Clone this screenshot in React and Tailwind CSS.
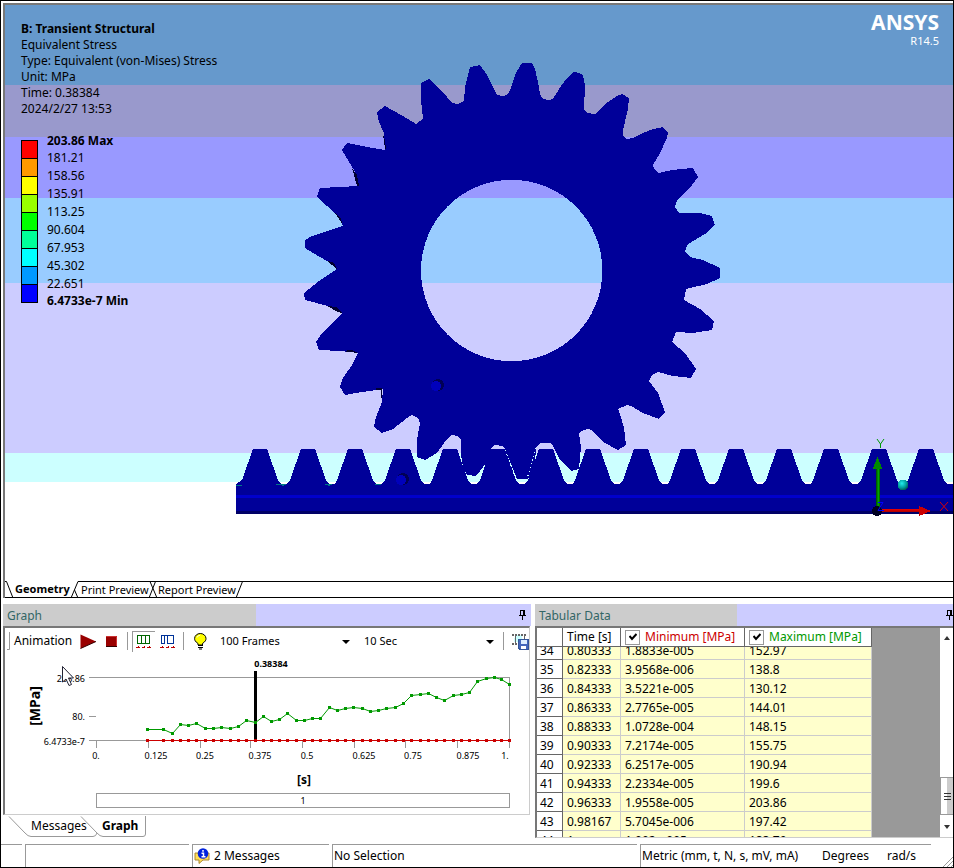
const BANDS = [
  "h-[80px] bg-[#6699cc]",
  "h-[52px] bg-[#9999cc]",
  "h-[61px] bg-[#9999ff]",
  "h-[85px] bg-[#99ccff]",
  "h-[170px] bg-[#ccccff]",
  "h-[29px] bg-[#ccffff]",
];

const LEGEND_COLORS = [
  "bg-[#ff0000]",
  "bg-[#ff9900]",
  "bg-[#ffff00]",
  "bg-[#99ff00]",
  "bg-[#00ff00]",
  "bg-[#00ff99]",
  "bg-[#00ffff]",
  "bg-[#0099ff]",
  "bg-[#0000ff]",
];

const LEGEND_VALUES = ["181.21", "158.56", "135.91", "113.25", "90.604", "67.953", "45.302", "22.651"];

// Gear outline, clockwise from the top tooth
const GEAR =
  "503,96 507,95 509,92 511,88 513,81 516,73 522,63 532,63 535,69 537,78 539,87 540,94 543,99 548,100 553,99 556,94 561,86 568,77 574,72 579,73 583,75 585,85 584,110 587,113 595,114 600,109 608,102 617,96 622,94 629,98 628,109 623,130 623,136 627,139 633,138 643,133 653,129 663,127 668,133 667,138 660,153 653,165 654,169 659,173 667,171 680,169 693,168 698,177 692,185 677,200 675,207 679,213 700,213 712,216 715,225 705,234 688,244 685,251 690,257 703,260 720,268 720,278 707,284 686,289 684,300 700,309 714,321 712,330 693,333 676,332 672,342 685,353 696,369 691,378 673,376 658,372 652,375 649,381 658,393 665,412 659,419 643,413 633,407 627,405 618,409 621,417 624,428 626,445 618,450 603,442 592,430 587,429 580,432 579,434 581,447 579,469 571,471 560,460 552,444 550,443 540,443 536,447 535,463 528,479 517,479 505,449 503,446 494,445 491,449 487,462 476,476 467,475 463,467 461,455 461,440 457,436 452,435 447,439 437,453 425,460 417,457 417,440 420,423 418,418 412,415 407,418 393,429 382,433 374,427 376,417 382,402 383,389 362,392 345,395 340,387 343,378 352,365 358,353 340,351 319,350 316,342 322,333 333,323 342,313 328,306 305,300 304,293 319,281 337,269 327,261 313,253 305,248 305,240 312,236 343,226 337,215 317,197 320,188 358,186 357,175 342,150 347,143 367,147 385,150 384,133 379,122 377,112 385,106 403,116 416,124 423,119 421,100 421,83 429,79 442,91 452,103 458,104 464,101 465,87 470,67 480,65 487,75 492,85 497,95";

const rackTeeth = Array.from({ length: 15 }, (_, i) => {
  const x = Math.round(253 + i * 47.6);
  return `${x - 11},480 ${x},449 ${x + 14},449 ${x + 25},480 ${x + 28},484 ${x + 34},484`;
}).join(" ");

const CHART_X = [
  147, 163, 172, 180, 188, 196, 205, 213, 221, 230, 238, 246, 255, 263, 271, 279, 287, 296, 304, 312, 320, 329, 337,
  345, 353, 362, 370, 378, 386, 395, 403, 411, 420, 428, 436, 444, 453, 461, 469, 477, 486, 494, 501, 509,
];
const CHART_Y = [
  729, 729, 733, 724, 725, 723, 728, 728, 727, 728, 726, 720, 722, 716, 721, 719, 713, 720, 720, 718, 718, 707, 710,
  708, 707, 708, 711, 710, 708, 707, 703, 695, 694, 693, 697, 700, 695, 694, 692, 681, 678, 677, 679, 684,
];

const X_TICKS = [
  [96, 96, "0."],
  [148, 156, "0.125"],
  [200, 205, "0.25"],
  [250, 260, "0.375"],
  [302, 307, "0.5"],
  [354, 364, "0.625"],
  [405, 413, "0.75"],
  [457, 468, "0.875"],
  [509, 505, "1."],
];

const ROWS = [
  [35, "0.82333", "3.9568e-006", "138.8"],
  [36, "0.84333", "3.5221e-005", "130.12"],
  [37, "0.86333", "2.7765e-005", "144.01"],
  [38, "0.88333", "1.0728e-004", "148.15"],
  [39, "0.90333", "7.2174e-005", "155.75"],
  [40, "0.92333", "6.2517e-005", "190.94"],
  [41, "0.94333", "2.2334e-005", "199.6"],
  [42, "0.96333", "1.9558e-005", "203.86"],
  [43, "0.98167", "5.7045e-006", "197.42"],
  [44, "1.", "1.002e-005", "183.79"],
];

function Model() {
  return (
    <svg className="absolute left-0 top-0 h-[576px] w-[948px]" viewBox="5 5 948 576" shapeRendering="crispEdges">
      <defs>
        <linearGradient id="greenShaft">
          <stop offset="0" stopColor="#004400" />
          <stop offset="0.6" stopColor="#00aa00" />
          <stop offset="1" stopColor="#005500" />
        </linearGradient>
        <linearGradient id="redShaft" x1="0" y1="0" x2="0" y2="1">
          <stop offset="0" stopColor="#ee0000" />
          <stop offset="1" stopColor="#aa0000" />
        </linearGradient>
        <radialGradient id="ball" cx="0.4" cy="0.35" r="0.7">
          <stop offset="0" stopColor="#22eeee" />
          <stop offset="0.6" stopColor="#009999" />
          <stop offset="1" stopColor="#004444" />
        </radialGradient>
      </defs>

      {/* Gear */}
      <path
        d={`M${GEAR}Z M421,270.5a90.7,90.7 0 1 0 181.4,0a90.7,90.7 0 1 0 -181.4,0Z`}
        fill="#000099"
        fillRule="evenodd"
      />
      <g fill="#000033">
        <path d="M383,134l2,6 1,9h-1z" />
        <path d="M352,168l5,7 2,11h-2z" />
        <path d="M335,213l5,4 3,8z" />
        <path d="M326,260l8,3 3,6z" />
        <path d="M327,306l9,1 6,6-4,-1z" />
        <path d="M342,351l10,-1 6,3z" />
        <path d="M370,389l12,-1v11l-1,-2v-7z" />
      </g>

      {/* Rack */}
      <polygon points={`236,514 236,484 ${rackTeeth} 953,480 953,514`} fill="#000099" />
      <path d="M236,496.500H953" stroke="#0000cc" strokeWidth="3" />
      <path d="M236,512.500H953" stroke="#000066" strokeWidth="3" />
      <path d="M236,485h6M276,484h10l-4,2M325,484h7l-4,2M375,484h6" stroke="#007788" fill="none" />
      <path d="M505,450l11,29M536,448l-9,31" stroke="#ccffff" strokeDasharray="1 3" fill="none" />

      {/* Contact markers */}
      <circle cx="438" cy="385" r="6" fill="#000055" />
      <circle cx="436" cy="386" r="5" fill="#0000bb" />
      <circle cx="403" cy="479" r="6" fill="#000055" />
      <circle cx="401" cy="480" r="5" fill="#0000bb" />
      <circle cx="903" cy="485" r="5.5" fill="url(#ball)" />

      {/* Triad */}
      <rect x="876" y="468" width="4" height="40" fill="url(#greenShaft)" />
      <path d="M877.500,457l5,12h-10z" fill="#008800" />
      <rect x="881" y="509" width="39" height="3" fill="url(#redShaft)" />
      <path d="M919,506l12,5-12,5z" fill="#cc0000" />
      <circle cx="877" cy="511" r="5" fill="#000022" />
      <g fill="none" shapeRendering="auto" strokeWidth="1">
        <path d="M877,439l3.500,5v4M884,439l-3.500,5" stroke="#009900" />
        <path d="M940,502l8,9M948,502l-8,9" stroke="#dd0000" />
        <path d="M878,502.500h5l-5,8h6" stroke="#0000ff" />
      </g>
    </svg>
  );
}

function Viewport() {
  return (
    <section className="relative min-h-[576px] flex-1 overflow-hidden bg-white">
      <div className="absolute inset-0">
        {BANDS.map((band) => (
          <div key={band} className={band} />
        ))}
      </div>
      <Model />

      <div className="relative flex justify-between pl-4 pr-3.5">
        <div className="pt-4 leading-4">
          <h1 className="font-bold">B: Transient Structural</h1>
          <p>Equivalent Stress</p>
          <p>Type: Equivalent (von-Mises) Stress</p>
          <p>Unit: MPa</p>
          <p>Time: 0.38384</p>
          <p>2024/2/27 13:53</p>

          <div className="mt-[15px] flex gap-[9px]">
            <div className="mt-2 flex h-[163px] w-[17px] flex-col border border-black">
              {LEGEND_COLORS.map((color) => (
                <div key={color} className={`flex-1 border-b border-black last:border-b-0 ${color}`} />
              ))}
            </div>
            <ul className="leading-[18px]">
              <li className="h-[17px] font-bold leading-[17px]">203.86 Max</li>
              {LEGEND_VALUES.map((value) => (
                <li key={value}>{value}</li>
              ))}
              <li className="font-bold leading-4">6.4733e-7 Min</li>
            </ul>
          </div>
        </div>

        <div className="pt-1 text-right text-white">
          <p className="text-[21px] font-bold leading-[26px]">ANSYS</p>
          <p className="text-[11px] leading-3">R14.5</p>
        </div>
      </div>
    </section>
  );
}

function TabSlash({ children }) {
  return (
    <svg className="h-[17px] w-[10px] shrink-0" viewBox="0 0 10 17" fill="none" stroke="#000">
      {children}
    </svg>
  );
}

function ViewTabs() {
  return (
    <nav className="flex h-[17px] shrink-0 items-stretch border-b border-black bg-white text-[11px] leading-4">
      <TabSlash>
        <path d="M0,0.500h1.500L8,17" />
      </TabSlash>
      <button className="w-[56px] whitespace-nowrap text-left font-bold">Geometry</button>
      <TabSlash>
        <path d="M0,17L7,0.500H10M3.500,9L7,17" />
      </TabSlash>
      <button className="w-[67px] whitespace-nowrap border-t border-black text-left leading-4">Print Preview</button>
      <TabSlash>
        <path d="M0,0.500H10M1,17L7.500,0.500M2,0.500L9,17" />
      </TabSlash>
      <button className="w-[77px] whitespace-nowrap border-t border-black text-left leading-4">Report Preview</button>
      <TabSlash>
        <path d="M0,0.500H10M1,17L7.500,0.500" />
      </TabSlash>
      <div className="flex-1 border-t border-black" />
    </nav>
  );
}

function Pin() {
  return (
    <svg className="h-[10px] w-[7px] shrink-0" viewBox="0 0 7 10" shapeRendering="crispEdges">
      <path d="M1,0h5v5h1v1H4v4H3V6H0V5h1zM2,1v4h2V1z" fill="#000" fillRule="evenodd" />
    </svg>
  );
}

function PanelTitle({ title, width, pinClass }) {
  return (
    <header className="flex h-[22px] shrink-0 items-center overflow-hidden bg-[#ccccff]">
      <h2 className={`h-full bg-[#cccccc] pl-1 text-[12px] leading-[23px] text-[#336666] ${width}`}>{title}</h2>
      <button aria-label="Pin panel" className={`ml-auto ${pinClass}`}>
        <Pin />
      </button>
    </header>
  );
}

function ToolSelect({ label, value, width }) {
  return (
    <div className={`relative ${width}`}>
      <select
        aria-label={label}
        defaultValue={value}
        className="block h-6 w-full appearance-none bg-transparent text-[11px] leading-4 outline-none"
      >
        <option>{value}</option>
      </select>
      <svg className="pointer-events-none absolute right-2 top-[11px] h-1 w-2" viewBox="0 0 8 4">
        <path d="M0,0h8l-4,4z" fill="#000" />
      </svg>
    </div>
  );
}

function FramesIcon({ color, sparse }) {
  return (
    <svg className="h-[13px] w-[16px]" viewBox="0 0 16 13" shapeRendering="crispEdges" fill="none">
      <path
        d={
          sparse
            ? "M1,0.500h13M1.500,0v9M4.500,0v9M7.500,0v9M13.500,0v9M1,8.500h3M7,8.500h7"
            : "M1,0.500h13M1.500,0v9M5.500,0v9M9.500,0v9M13.500,0v9M1,8.500h13"
        }
        stroke={color}
      />
      <path d="M0,12.500h4M6,12.500h3M11,12.500h4M2.500,11v1M8.500,11v1M13.500,11v1" stroke="#bb0000" />
    </svg>
  );
}

function Toolbar() {
  return (
    <div className="flex h-[28px] shrink-0 items-center overflow-hidden pb-0.5">
      <svg className="ml-0.5 h-[18px] w-[4px] shrink-0" viewBox="0 0 4 18">
        <path d="M0,17.500H2.500V0" fill="none" stroke="#999" />
      </svg>
      <span className="w-[64px] shrink-0 pl-[3px]">Animation</span>
      <button aria-label="Play" className="ml-[5px]">
        <svg className="h-[15px] w-[17px]" viewBox="0 0 17 15">
          <path d="M0.500,0.500L16,7.500L0.500,14.500z" fill="#990000" />
          <path d="M0.500,14.500L16,7.500" stroke="#330000" />
        </svg>
      </button>
      <button aria-label="Stop" className="ml-[9px]">
        <svg className="h-[11px] w-[11px]" viewBox="0 0 11 11">
          <path d="M0,0h11v11H0z" fill="#990000" />
          <path d="M0,0.500h10.500V11" fill="none" stroke="#cc3333" />
          <path d="M0,10.500h11" stroke="#330000" />
        </svg>
      </button>
      <div className="ml-[10px] h-[18px] w-px bg-[#999999]" />
      <button
        aria-label="Distributed frames"
        className="ml-1 flex h-[21px] w-[23px] items-center justify-center border-l border-t border-[#999999]"
      >
        <FramesIcon color="#006600" />
      </button>
      <button aria-label="Result set frames" className="ml-[5px]">
        <FramesIcon color="#003399" sparse />
      </button>
      <div className="ml-[7px] h-[18px] w-px bg-[#999999]" />
      <button aria-label="Update contour range" className="ml-[10px]">
        <svg className="h-[17px] w-[13px]" viewBox="0 0 13 17">
          <path d="M4,10.500C1,8.500 0.600,7 0.600,5.500a5.700,5 0 0 1 11.400,0C12,7 11.500,8.500 8.500,10.500V12H4z" fill="#ffff00" stroke="#000" />
          <path d="M3,4.500C4,2.500 5,2.500 6,2.500" stroke="#fff" fill="none" />
          <path d="M4,12.500h5M4,14.500h5M5,16h3" stroke="#000" strokeWidth="1.200" />
        </svg>
      </button>
      <div className="ml-[13px] flex items-center gap-[6px]">
        <ToolSelect label="Frames" value="100 Frames" width="w-[138px]" />
        <ToolSelect label="Duration" value="10 Sec" width="w-[138px]" />
      </div>
      <div className="ml-px h-[18px] w-px bg-[#999999]" />
      <button aria-label="Export video" className="ml-[8px]">
        <svg className="h-[17px] w-[17px]" viewBox="0 0 17 17" shapeRendering="crispEdges">
          <path d="M3,2h7v7H2z" fill="#ccffff" />
          <path d="M0,1.500h15M0,10.500h5" stroke="#666" strokeWidth="2" strokeDasharray="2 1" />
          <path d="M3.500,2v9M12.500,2v4" stroke="#666" />
          <path d="M6.500,6.500h10v10H8l-1.500,-1.500z" fill="#4466bb" stroke="#335599" />
          <path d="M9,7h6v4H9z" fill="#ddeeff" />
          <path d="M9,13h5v3H9z" fill="#fff" />
        </svg>
      </button>
    </div>
  );
}

function Chart() {
  return (
    <svg className="h-[160px] w-[524px] shrink-0" viewBox="5 656 524 160" fill="#000" fontSize="9">
      <g stroke="#999" shapeRendering="crispEdges" fill="none">
        <path d="M89,677.500H509.500V741" />
        <path d="M89,716.500H96M89,740.500H509" />
        {X_TICKS.map(([x, , label]) => (
          <path key={label} d={`M${x + 0.5},741v7`} />
        ))}
        <rect x="96.500" y="793.500" width="413" height="14" />
      </g>

      <text x="85" y="682" textAnchor="end">203.86</text>
      <text x="85" y="720" textAnchor="end">80.</text>
      <text x="85" y="745" textAnchor="end">6.4733e-7</text>
      {X_TICKS.map(([, x, label]) => (
        <text key={label} x={x} y="759" textAnchor="middle">
          {label}
        </text>
      ))}
      <text x="271" y="667" textAnchor="middle" fontWeight="bold">0.38384</text>
      <text x="303" y="804" textAnchor="middle">1</text>
      <text x="304" y="784" textAnchor="middle" fontWeight="bold" fontSize="12">[s]</text>
      <text transform="translate(40 706) rotate(-90)" textAnchor="middle" fontWeight="bold" fontSize="14">
        [MPa]
      </text>

      <path d="M255.500,671V741" stroke="#000" strokeWidth="3" shapeRendering="crispEdges" />
      <polyline
        points={CHART_X.map((x, i) => `${x + 0.5},${CHART_Y[i] + 0.5}`).join(" ")}
        fill="none"
        stroke="#009900"
      />
      <path d="M147,740.500H509" stroke="#cc0000" shapeRendering="crispEdges" />
      {CHART_X.map((x, i) => (
        <g key={x} shapeRendering="crispEdges">
          <rect x={x - 1} y={CHART_Y[i] - 1} width="3" height="3" fill="#009900" />
          <rect x={x - 1} y="739" width="3" height="3" fill="#cc0000" />
        </g>
      ))}

      {/* Mouse cursor */}
      <path d="M62.500,666.500V682L66,679L69,685.500L71.500,684.500L68.500,678H73.500Z" fill="#fff" stroke="#223" />
    </svg>
  );
}

function GraphTabs() {
  return (
    <div className="relative flex h-[22px] shrink-0 items-center">
      <svg className="absolute left-0 top-0 h-[22px] w-[150px]" viewBox="3 816 150 22" fill="none" stroke="#999">
        <path d="M9,817.500L25,834Q28,837.500 31,837.500H93Q96,837.500 97,834" />
        <path d="M81,817.500L97,834Q100,837.500 103,837.500H143Q145.500,837.500 145.500,835V817" />
      </svg>
      <button className="relative ml-7 w-[71px] text-left">Messages</button>
      <button className="relative font-bold">Graph</button>
    </div>
  );
}

function GraphPanel() {
  return (
    <section className="flex w-[528px] shrink-0 flex-col">
      <PanelTitle title="Graph" width="w-[253px]" pinClass="mr-[5px]" />
      <div className="mr-px flex h-[189px] flex-col overflow-hidden border-b border-l-2 border-r border-t-2 border-b-[#cccccc] border-l-[#777777] border-r-[#cccccc] border-t-[#777777]">
        <Toolbar />
        <Chart />
      </div>
      <GraphTabs />
    </section>
  );
}

function Cell({ children, clipped }) {
  if (clipped) {
    return <div className="flex h-[12px] items-end overflow-hidden leading-4">{children}</div>;
  }
  return <div className="h-[18px] leading-5">{children}</div>;
}

function Row({ cells, clipped }) {
  const [index, ...values] = cells;
  return (
    <tr>
      <th scope="row" className="border-b border-r border-[#666666] bg-white p-0 pl-[3px] text-left font-normal">
        <Cell clipped={clipped}>{index}</Cell>
      </th>
      {values.map((value, i) => (
        <td key={i} className="border-b border-r border-[#cccccc] bg-[#ffffcc] p-0 pl-1">
          <Cell clipped={clipped}>{value}</Cell>
        </td>
      ))}
    </tr>
  );
}

function SeriesHeader({ id, label, color }) {
  return (
    <div className="flex items-center pl-1">
      <span className="relative flex">
        <input
          id={id}
          type="checkbox"
          defaultChecked
          className="h-[15px] w-[15px] appearance-none border border-[#999999] bg-white"
        />
        <svg className="pointer-events-none absolute left-1 top-[3px] h-2 w-2" viewBox="0 0 8 8">
          <path d="M0.500,3L3,6L7.500,1" fill="none" stroke="#000" strokeWidth="2" />
        </svg>
      </span>
      <label htmlFor={id} className={`pl-[5px] ${color}`}>
        {label}
      </label>
    </div>
  );
}

function TabularPanel() {
  return (
    <section className="flex min-w-0 flex-1 flex-col">
      <PanelTitle title="Tabular Data" width="w-[202px]" pinClass="" />
      <div className="flex h-[212px] overflow-hidden border-b border-l-2 border-t-2 border-b-[#cccccc] border-l-[#777777] border-t-[#777777]">
        <div className="flex-1 overflow-hidden bg-[#999999]">
          <table className="w-[335px] table-fixed border-separate border-spacing-0 whitespace-nowrap">
            <thead className="leading-[18px]">
              <tr className="[&>th]:h-[19px] [&>th]:border-b [&>th]:border-r [&>th]:border-[#666666] [&>th]:bg-white [&>th]:p-0 [&>th]:font-normal">
                <th className="w-[26px]" />
                <th className="w-[58px]">
                  <div className="pl-1 text-left">Time [s]</div>
                </th>
                <th className="w-[124px]">
                  <SeriesHeader id="minimum" label="Minimum [MPa]" color="text-[#cc0000]" />
                </th>
                <th className="w-[127px]">
                  <SeriesHeader id="maximum" label="Maximum [MPa]" color="text-[#009900]" />
                </th>
              </tr>
            </thead>
            <tbody>
              <Row cells={[34, "0.80333", "1.8833e-005", "152.97"]} clipped />
              {ROWS.map((row) => (
                <Row key={row[0]} cells={row} />
              ))}
            </tbody>
          </table>
        </div>
        <div className="flex w-[13px] flex-col items-center justify-between bg-white py-2">
          <svg className="h-[4px] w-[6px]" viewBox="0 0 6 4">
            <path d="M0,4L3,0L6,4z" fill="#333" />
          </svg>
          <div className="mb-2.5 mt-auto flex h-[38px] w-full flex-col items-end justify-center gap-0.5 border border-r-0 border-[#999999] bg-[linear-gradient(90deg,#fff_50%,#ccc_50%)] pr-0.5">
            <i className="h-px w-[7px] bg-[#333333]" />
            <i className="h-px w-[7px] bg-[#333333]" />
            <i className="h-px w-[7px] bg-[#333333]" />
          </div>
          <svg className="h-[4px] w-[6px]" viewBox="0 0 6 4">
            <path d="M0,0L3,4L6,0z" fill="#333" />
          </svg>
        </div>
      </div>
    </section>
  );
}

function StatusBar() {
  return (
    <footer className="mt-1.5 flex h-[23px] shrink-0 gap-[3px] leading-[22px]">
      <div className="w-[21px] border-t border-[#999999]" />
      <div className="w-[164px] border-l border-t border-[#999999]" />
      <div className="flex w-[137px] items-start border-l border-t border-[#999999] pl-px">
        <svg className="mt-[3px] h-[16px] w-[17px]" viewBox="0 0 17 16">
          <path d="M1,5h14v7H9l-4,3.500V12H1z" fill="#ffdd55" stroke="#aa8833" />
          <circle cx="9" cy="5.500" r="5.300" fill="#0022dd" />
          <path d="M9,2v1.800M7.500,5.200H9.500V8.500M7.500,8.800h4" stroke="#fff" strokeWidth="1.500" fill="none" />
        </svg>
        <span className="pl-[3px]">2 Messages</span>
      </div>
      <div className="flex-1 border-l border-t border-[#999999] pl-px">No Selection</div>
      <div className="flex w-[291px] whitespace-nowrap border-l border-t border-[#999999] pl-px">
        <span className="w-[180px]">Metric (mm, t, N, s, mV, mA)</span>
        <span className="w-[65px]">Degrees</span>
        <span>rad/s</span>
      </div>
      <div className="flex w-[19px] items-end justify-end">
        <svg className="h-[10px] w-[11px]" viewBox="0 0 11 10" stroke="#999">
          <path d="M1,10L11,0M5,10L11,4M9,10L11,8" />
        </svg>
      </div>
    </footer>
  );
}

export default function App() {
  return (
    <div className="flex min-h-screen flex-col border border-black bg-white font-['Noto_Sans',sans-serif] text-[12px] leading-4 text-black">
      <div className="ml-0.5 mt-0.5 flex flex-1 flex-col border-l-2 border-t-2 border-[#777777]">
        <Viewport />
        <ViewTabs />
      </div>
      <main className="ml-0.5 mt-1.5 flex shrink-0 gap-1">
        <GraphPanel />
        <TabularPanel />
      </main>
      <StatusBar />
    </div>
  );
}
